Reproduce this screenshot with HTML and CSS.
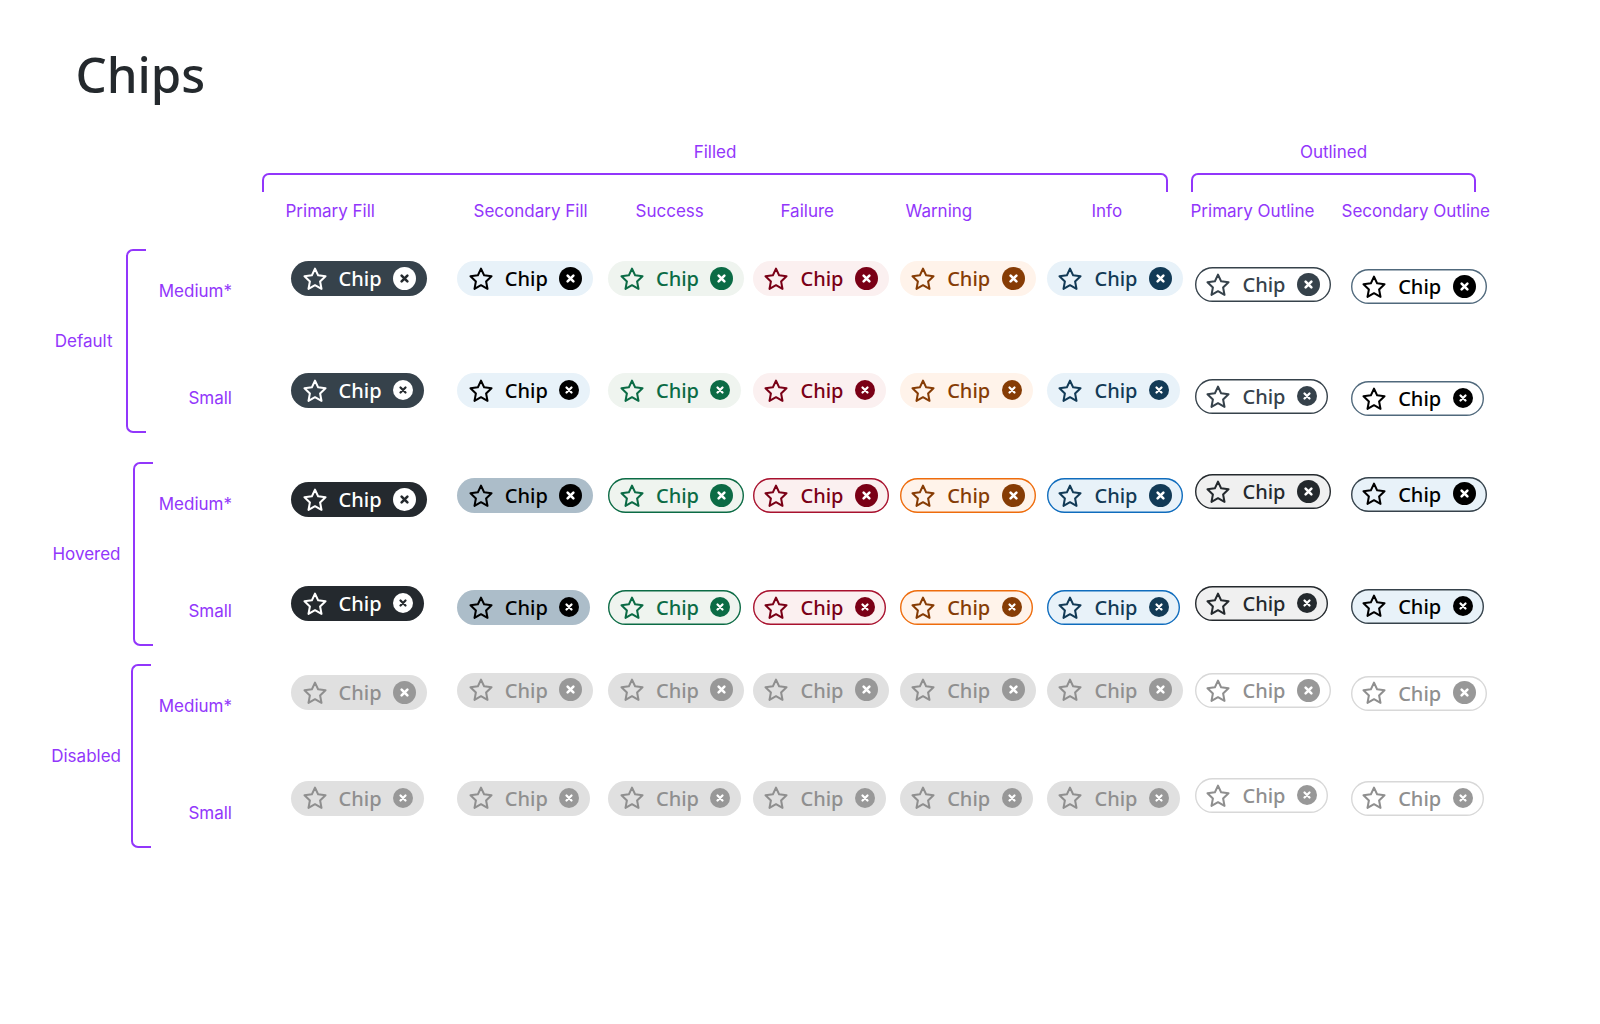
FILE: index.html
```html
<!DOCTYPE html>
<html lang="en">
<head>
<meta charset="utf-8">
<title>Chips</title>
<link rel="stylesheet" href="styles.css">
</head>
<body>
<svg class="sprite" aria-hidden="true">
  <defs>
    <symbol id="star" viewBox="0 0 24 24"><path d="M12 2.4l2.9 6.2 6.8.9-5 4.7 1.3 6.9-6-3.4-6 3.4 1.3-6.9-5-4.7 6.8-.9z" fill="none" stroke="currentColor" stroke-width="1.9" stroke-linejoin="round"/></symbol>
    <symbol id="x" viewBox="0 0 24 24"><path d="M9 9l6 6M15 9l-6 6" fill="none" stroke="currentColor" stroke-width="2.7" stroke-linecap="round"/></symbol>
  </defs>
</svg>
<main class="sheet">
  <h1 class="title">Chips</h1>

  <div class="kinds">
    <div class="kind kind-filled"><span class="kind-name">Filled</span><div class="bracket-top"></div></div>
    <div class="kind kind-outlined"><span class="kind-name">Outlined</span><div class="bracket-top"></div></div>
  </div>

  <div class="variants">
    <span>Primary Fill</span><span>Secondary Fill</span><span>Success</span><span>Failure</span><span>Warning</span><span>Info</span><span>Primary Outline</span><span>Secondary Outline</span>
  </div>

  <div class="board">
    <aside class="states">
      <section class="state state-default">
        <span class="state-name">Default</span><div class="bracket-left"></div>
        <div class="sizes"><span>Medium*</span><span>Small</span></div>
      </section>
      <section class="state state-hovered">
        <span class="state-name">Hovered</span><div class="bracket-left"></div>
        <div class="sizes"><span>Medium*</span><span>Small</span></div>
      </section>
      <section class="state state-disabled">
        <span class="state-name">Disabled</span><div class="bracket-left"></div>
        <div class="sizes"><span>Medium*</span><span>Small</span></div>
      </section>
    </aside>

    <div class="col col-primary">
      <div class="chip md primary"><svg class="star"><use href="#star"/></svg><span class="text">Chip</span><span class="close"><svg><use href="#x"/></svg></span></div>
      <div class="chip sm primary"><svg class="star"><use href="#star"/></svg><span class="text">Chip</span><span class="close"><svg><use href="#x"/></svg></span></div>
      <div class="chip md primary hover"><svg class="star"><use href="#star"/></svg><span class="text">Chip</span><span class="close"><svg><use href="#x"/></svg></span></div>
      <div class="chip sm primary hover"><svg class="star"><use href="#star"/></svg><span class="text">Chip</span><span class="close"><svg><use href="#x"/></svg></span></div>
      <div class="chip md disabled"><svg class="star"><use href="#star"/></svg><span class="text">Chip</span><span class="close"><svg><use href="#x"/></svg></span></div>
      <div class="chip sm disabled"><svg class="star"><use href="#star"/></svg><span class="text">Chip</span><span class="close"><svg><use href="#x"/></svg></span></div>
    </div>

    <div class="col col-fill col-w2">
      <div class="chip md secondary"><svg class="star"><use href="#star"/></svg><span class="text">Chip</span><span class="close"><svg><use href="#x"/></svg></span></div>
      <div class="chip sm secondary"><svg class="star"><use href="#star"/></svg><span class="text">Chip</span><span class="close"><svg><use href="#x"/></svg></span></div>
      <div class="chip md secondary hover"><svg class="star"><use href="#star"/></svg><span class="text">Chip</span><span class="close"><svg><use href="#x"/></svg></span></div>
      <div class="chip sm secondary hover"><svg class="star"><use href="#star"/></svg><span class="text">Chip</span><span class="close"><svg><use href="#x"/></svg></span></div>
      <div class="chip md disabled"><svg class="star"><use href="#star"/></svg><span class="text">Chip</span><span class="close"><svg><use href="#x"/></svg></span></div>
      <div class="chip sm disabled"><svg class="star"><use href="#star"/></svg><span class="text">Chip</span><span class="close"><svg><use href="#x"/></svg></span></div>
    </div>

    <div class="col col-fill col-w3">
      <div class="chip md success"><svg class="star"><use href="#star"/></svg><span class="text">Chip</span><span class="close"><svg><use href="#x"/></svg></span></div>
      <div class="chip sm success"><svg class="star"><use href="#star"/></svg><span class="text">Chip</span><span class="close"><svg><use href="#x"/></svg></span></div>
      <div class="chip md success hover"><svg class="star"><use href="#star"/></svg><span class="text">Chip</span><span class="close"><svg><use href="#x"/></svg></span></div>
      <div class="chip sm success hover"><svg class="star"><use href="#star"/></svg><span class="text">Chip</span><span class="close"><svg><use href="#x"/></svg></span></div>
      <div class="chip md disabled"><svg class="star"><use href="#star"/></svg><span class="text">Chip</span><span class="close"><svg><use href="#x"/></svg></span></div>
      <div class="chip sm disabled"><svg class="star"><use href="#star"/></svg><span class="text">Chip</span><span class="close"><svg><use href="#x"/></svg></span></div>
    </div>

    <div class="col col-fill col-w4">
      <div class="chip md failure"><svg class="star"><use href="#star"/></svg><span class="text">Chip</span><span class="close"><svg><use href="#x"/></svg></span></div>
      <div class="chip sm failure"><svg class="star"><use href="#star"/></svg><span class="text">Chip</span><span class="close"><svg><use href="#x"/></svg></span></div>
      <div class="chip md failure hover"><svg class="star"><use href="#star"/></svg><span class="text">Chip</span><span class="close"><svg><use href="#x"/></svg></span></div>
      <div class="chip sm failure hover"><svg class="star"><use href="#star"/></svg><span class="text">Chip</span><span class="close"><svg><use href="#x"/></svg></span></div>
      <div class="chip md disabled"><svg class="star"><use href="#star"/></svg><span class="text">Chip</span><span class="close"><svg><use href="#x"/></svg></span></div>
      <div class="chip sm disabled"><svg class="star"><use href="#star"/></svg><span class="text">Chip</span><span class="close"><svg><use href="#x"/></svg></span></div>
    </div>

    <div class="col col-fill col-w5">
      <div class="chip md warning"><svg class="star"><use href="#star"/></svg><span class="text">Chip</span><span class="close"><svg><use href="#x"/></svg></span></div>
      <div class="chip sm warning"><svg class="star"><use href="#star"/></svg><span class="text">Chip</span><span class="close"><svg><use href="#x"/></svg></span></div>
      <div class="chip md warning hover"><svg class="star"><use href="#star"/></svg><span class="text">Chip</span><span class="close"><svg><use href="#x"/></svg></span></div>
      <div class="chip sm warning hover"><svg class="star"><use href="#star"/></svg><span class="text">Chip</span><span class="close"><svg><use href="#x"/></svg></span></div>
      <div class="chip md disabled"><svg class="star"><use href="#star"/></svg><span class="text">Chip</span><span class="close"><svg><use href="#x"/></svg></span></div>
      <div class="chip sm disabled"><svg class="star"><use href="#star"/></svg><span class="text">Chip</span><span class="close"><svg><use href="#x"/></svg></span></div>
    </div>

    <div class="col col-fill col-w6">
      <div class="chip md info"><svg class="star"><use href="#star"/></svg><span class="text">Chip</span><span class="close"><svg><use href="#x"/></svg></span></div>
      <div class="chip sm info"><svg class="star"><use href="#star"/></svg><span class="text">Chip</span><span class="close"><svg><use href="#x"/></svg></span></div>
      <div class="chip md info hover"><svg class="star"><use href="#star"/></svg><span class="text">Chip</span><span class="close"><svg><use href="#x"/></svg></span></div>
      <div class="chip sm info hover"><svg class="star"><use href="#star"/></svg><span class="text">Chip</span><span class="close"><svg><use href="#x"/></svg></span></div>
      <div class="chip md disabled"><svg class="star"><use href="#star"/></svg><span class="text">Chip</span><span class="close"><svg><use href="#x"/></svg></span></div>
      <div class="chip sm disabled"><svg class="star"><use href="#star"/></svg><span class="text">Chip</span><span class="close"><svg><use href="#x"/></svg></span></div>
    </div>

    <div class="col col-outline-primary">
      <div class="chip md outline-primary"><svg class="star"><use href="#star"/></svg><span class="text">Chip</span><span class="close"><svg><use href="#x"/></svg></span></div>
      <div class="chip sm outline-primary"><svg class="star"><use href="#star"/></svg><span class="text">Chip</span><span class="close"><svg><use href="#x"/></svg></span></div>
      <div class="chip md outline-primary hover"><svg class="star"><use href="#star"/></svg><span class="text">Chip</span><span class="close"><svg><use href="#x"/></svg></span></div>
      <div class="chip sm outline-primary hover"><svg class="star"><use href="#star"/></svg><span class="text">Chip</span><span class="close"><svg><use href="#x"/></svg></span></div>
      <div class="chip md disabled-outline"><svg class="star"><use href="#star"/></svg><span class="text">Chip</span><span class="close"><svg><use href="#x"/></svg></span></div>
      <div class="chip sm disabled-outline"><svg class="star"><use href="#star"/></svg><span class="text">Chip</span><span class="close"><svg><use href="#x"/></svg></span></div>
    </div>

    <div class="col col-outline-secondary">
      <div class="chip md outline-secondary"><svg class="star"><use href="#star"/></svg><span class="text">Chip</span><span class="close"><svg><use href="#x"/></svg></span></div>
      <div class="chip sm outline-secondary"><svg class="star"><use href="#star"/></svg><span class="text">Chip</span><span class="close"><svg><use href="#x"/></svg></span></div>
      <div class="chip md outline-secondary hover"><svg class="star"><use href="#star"/></svg><span class="text">Chip</span><span class="close"><svg><use href="#x"/></svg></span></div>
      <div class="chip sm outline-secondary hover"><svg class="star"><use href="#star"/></svg><span class="text">Chip</span><span class="close"><svg><use href="#x"/></svg></span></div>
      <div class="chip md disabled-outline"><svg class="star"><use href="#star"/></svg><span class="text">Chip</span><span class="close"><svg><use href="#x"/></svg></span></div>
      <div class="chip sm disabled-outline"><svg class="star"><use href="#star"/></svg><span class="text">Chip</span><span class="close"><svg><use href="#x"/></svg></span></div>
    </div>
  </div>
</main>
</body>
</html>
```

FILE: styles.css
```css
* { box-sizing: border-box; }

html, body { margin: 0; background: #fff; }

.sprite { display: none; }

.sheet {
  --purple: #9236fb;
  width: 1600px;
  height: 1024px;
  overflow: hidden;
  font-family: Inter, "Liberation Sans", sans-serif;
  font-size: 17px;
  line-height: 20px;
  color: var(--purple);
}

.title {
  margin: 0;
  padding: 44px 0 0 75.5px;
  height: 142px;
  font-family: "Noto Sans", sans-serif;
  font-size: 49.2px;
  line-height: 60px;
  font-weight: 500;
  color: #24292d;
}

/* top brackets */
.kinds { display: flex; gap: 23px; padding-left: 262px; }
.kind { display: flex; flex-direction: column; align-items: center; gap: 11px; }
.kind-filled { width: 906px; }
.kind-outlined { width: 285px; }
.bracket-top {
  width: 100%;
  height: 19px;
  border: 2px solid var(--purple);
  border-bottom: 0;
  border-radius: 7px 7px 0 0;
}

.variants {
  display: grid;
  grid-template-columns: 188px 162px 145px 125px 186px 99px 151px auto;
  margin-top: 8.5px;
  padding-left: 285.5px;
}

/* board */
.board {
  display: grid;
  grid-template-columns: 291px 166.3px 151.2px 144.5px 146.7px 147.3px 148px 155.7px 1fr;
  margin-top: 28.5px;
}

/* state labels */
.states { display: flex; flex-direction: column; width: 232px; }
.state { display: flex; align-items: center; height: 184px; }
.state-hovered { margin-top: 29px; }
.state-disabled { margin-top: 18px; }
.state-name { text-align: right; padding: 0 13px 0 0; }
.state-default .state-name { width: 125.5px; }
.state-hovered .state-name { width: 132.5px; padding-right: 12px; }
.state-disabled .state-name { width: 131px; padding-right: 10px; }
.bracket-left {
  flex: none;
  width: 20px;
  height: 100%;
  border: 2px solid var(--purple);
  border-right: 0;
  border-radius: 7px 0 0 7px;
}
.sizes {
  flex: 1;
  align-self: stretch;
  display: flex;
  flex-direction: column;
  gap: 87px;
  padding-top: 32px;
  text-align: right;
}

/* columns: each state sits at its own height on the sheet */
.col { display: flex; flex-direction: column; align-items: flex-start; }

.col .chip:nth-child(1) { margin-top: 12px; }
.col .chip:nth-child(2) { margin-top: 77px; }
.col .chip:nth-child(3) { margin-top: 70px; }
.col .chip:nth-child(4) { margin-top: 77px; }
.col .chip:nth-child(5) { margin-top: 47.7px; }
.col .chip:nth-child(6) { margin-top: 73px; }

.col-primary .chip:nth-child(3) { margin-top: 74px; }
.col-primary .chip:nth-child(4) { margin-top: 69px; }
.col-primary .chip:nth-child(5) { margin-top: 54.3px; }
.col-primary .chip:nth-child(6) { margin-top: 70.7px; }

.col-outline-primary .chip:nth-child(1) { margin-top: 18px; }
.col-outline-primary .chip:nth-child(3) { margin-top: 60px; }
.col-outline-primary .chip:nth-child(4) { margin-top: 77px; }
.col-outline-primary .chip:nth-child(5) { margin-top: 52px; }
.col-outline-primary .chip:nth-child(6) { margin-top: 70px; }

.col-outline-secondary .chip:nth-child(1) { margin-top: 20px; }
.col-outline-secondary .chip:nth-child(3) { margin-top: 60.5px; }
.col-outline-secondary .chip:nth-child(4) { margin-top: 77px; }
.col-outline-secondary .chip:nth-child(5) { margin-top: 52px; }
.col-outline-secondary .chip:nth-child(6) { margin-top: 70px; }

/* chip */
.chip {
  --fg: #000;
  --bg: #fff;
  --line: transparent;
  --dot: var(--fg);
  --mark: #fff;
  display: flex;
  align-items: center;
  flex: none;
  height: 35px;
  padding: 0 11px 0 11.7px;
  background: var(--bg);
  border-radius: 18px;
  box-shadow: inset 0 0 0 1.4px var(--line);
  color: var(--fg);
  font-family: "Noto Sans", sans-serif;
  font-size: 20px;
  font-weight: 500;
  line-height: 27px;
}
.chip.md { width: 136px; }
.chip.sm { width: 133px; }

.star { flex: none; width: 26px; height: 26px; margin-left: -1.2px; }
.text { margin-left: 11px; }
.close {
  flex: none;
  display: flex;
  margin-left: auto;
  border-radius: 50%;
  background: var(--dot);
  color: var(--mark);
}
.close svg { display: block; width: 100%; height: 100%; }
.md .close { width: 23px; height: 23px; margin-bottom: 1px; }
.sm .close { width: 20px; height: 20px; margin-bottom: 1px; }

/* variants */
.primary { --bg: #36424b; --fg: #fff; --mark: #24292d; }
.primary.hover { --bg: #24292e; }
.secondary { --bg: #e8f2f9; --fg: #000; }
.secondary.hover { --bg: #acbdc9; }
.success { --bg: #eff4ef; --fg: #0b6b45; }
.success.hover { --line: #0b6b45; }
.failure { --bg: #fbf0f0; --fg: #7a0016; }
.failure.hover { --line: #a8112e; }
.warning { --bg: #fff3ea; --fg: #863c05; }
.warning.hover { --line: #ee6c0c; }
.info { --bg: #e8f2f9; --fg: #123a56; }
.info.hover { --line: #0f6cbd; }
.outline-primary { --fg: #36424b; --line: #36424b; }
.outline-primary.hover { --bg: #f0f0f0; --fg: #24292d; --line: #24292d; }
.outline-secondary { --fg: #000; --line: #50697c; }
.outline-secondary.hover { --bg: #e8f2f9; --line: #36424b; }
.disabled { --bg: #e0e0e0; --fg: #8f8f8f; --dot: #989898; }
.disabled-outline { --bg: #fff; --fg: #8f8f8f; --dot: #989898; --line: #d8d8d8; }
```
